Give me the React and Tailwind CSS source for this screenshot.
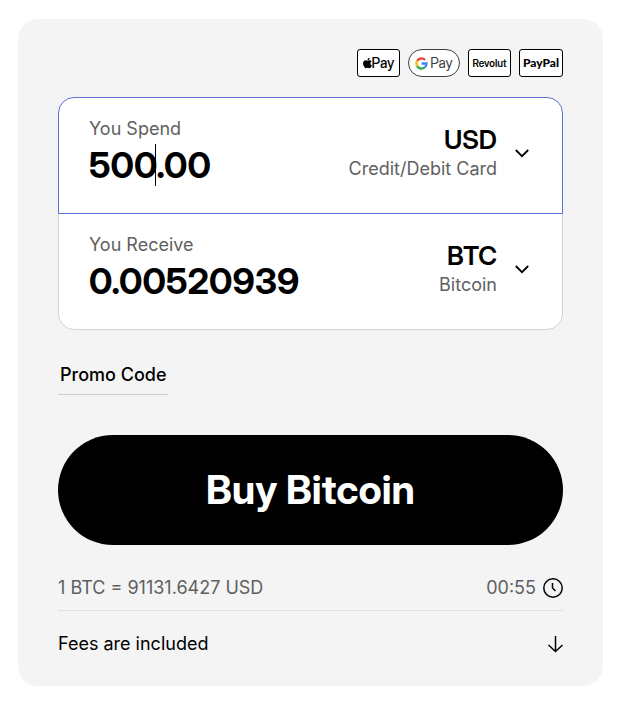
import { useState } from "react";
import { FaApple } from "react-icons/fa";
import { FcGoogle } from "react-icons/fc";

function PaymentMethods() {
  return (
    <ul className="flex justify-end gap-2 font-['Inter_Display','Inter',sans-serif]" aria-label="Payment methods">
      <li className="flex h-7 w-[43px] items-center justify-center rounded-[3px] border border-black bg-white text-sm font-medium">
        <FaApple className="h-3 w-[9px]" preserveAspectRatio="none" aria-hidden="true" />
        <span>Pay</span>
      </li>
      <li className="flex h-7 w-[52px] items-center justify-center gap-0.5 rounded-full border border-[#3c4043] bg-white text-sm text-[#3c4043]">
        <svg className="size-[13px]" viewBox="0 0 24 24" fill="none" strokeWidth="4.4" aria-hidden="true">
          <path d="M4 7.2A9.4 9.4 0 0 1 18.6 5.3" stroke="#ea4335" />
          <path d="M4 7.2a9.6 9.6 0 0 0 0 9.6" stroke="#fbbc04" />
          <path d="M4 16.8a9.4 9.4 0 0 0 14 2.3" stroke="#34a853" />
          <path d="M12.2 12h9.2a9.4 9.4 0 0 1-3.4 7.1" stroke="#4285f4" />
        </svg>
        <span>Pay</span>
      </li>
      <li className="flex h-7 w-[43px] items-center justify-center rounded-[3px] border border-black bg-white text-[10px] font-semibold">
        Revolut
      </li>
      <li className="flex h-7 w-11 items-center justify-center rounded-[3px] border border-black bg-white font-['Lato',sans-serif] text-[12px] font-black">
        PayPal
      </li>
    </ul>
  );
}

function AmountField({ id, label, value, onChange, currency, currencies, detail, caret, className }) {
  return (
    <div className={`flex h-[117px] items-start justify-between border bg-white pt-[19px] pr-8 pl-[30px] ${className}`}>
      <div className="relative min-w-0 flex-1">
        <label htmlFor={id} className="block text-lg leading-6 text-[#5f5f5f]">
          {label}
        </label>
        <input
          id={id}
          type="text"
          inputMode="decimal"
          value={value}
          onChange={onChange}
          className="block h-12 w-full bg-transparent font-['Inter_Display','Inter',sans-serif] text-4xl font-bold outline-none"
        />
        {caret && <span className="absolute top-[27px] left-[66px] h-[42px] w-px bg-black" aria-hidden="true" />}
      </div>
      <div className="flex items-center gap-[17px] pt-2">
        <div className="flex flex-col items-end">
          <select
            aria-label={`${label} currency`}
            defaultValue={currency}
            className="field-sizing-content h-[30px] appearance-none bg-transparent font-['Inter_Display','Inter',sans-serif] text-[26px] leading-[30px] font-semibold outline-none"
          >
            {currencies.map((c) => (
              <option key={c}>{c}</option>
            ))}
          </select>
          <span className="text-lg leading-7 text-[#5f5f5f]">{detail}</span>
        </div>
        <svg className="h-4 w-4" viewBox="0 0 16 16" fill="none" stroke="#000" strokeWidth="1.8" aria-hidden="true">
          <path d="M1.8 4 8 10.2 14.2 4" />
        </svg>
      </div>
    </div>
  );
}

export default function App() {
  const [spend, setSpend] = useState("500.00");
  const [receive, setReceive] = useState("0.00520939");

  return (
    <main className="min-h-screen bg-white pt-[19px] pr-[23px] pb-[19px] pl-[18px] font-['Inter',sans-serif] text-black">
      <form className="rounded-[20px] bg-[#f4f4f4] px-10 pt-[30px] pb-[30px]" onSubmit={(e) => e.preventDefault()}>
        <PaymentMethods />

        <div className="mt-5">
          <AmountField
            id="spend"
            label="You Spend"
            value={spend}
            onChange={(e) => setSpend(e.target.value)}
            currency="USD"
            currencies={["USD"]}
            detail="Credit/Debit Card"
            caret
            className="relative z-10 rounded-t-2xl border-[#5f71d8]"
          />
          <AmountField
            id="receive"
            label="You Receive"
            value={receive}
            onChange={(e) => setReceive(e.target.value)}
            currency="BTC"
            currencies={["BTC"]}
            detail="Bitcoin"
            className="-mt-px rounded-b-2xl border-[#d3d3d3]"
          />
        </div>

        <button type="button" className="mt-8 flex h-[33px] items-end border-b border-[#cfcfcf] px-0.5 pb-[7px] text-lg leading-6 font-medium">
          Promo Code
        </button>

        <button type="submit" className="mt-10 block h-[110px] w-full rounded-full bg-black font-['Inter_Display','Inter',sans-serif] text-[40px] font-bold text-white">
          Buy Bitcoin
        </button>

        <div className="mt-[30px] flex h-9 items-start justify-between border-b border-[#e0e0e0] text-lg leading-[26px] text-[#5f5f5f]">
          <span>1 BTC = 91131.6427 USD</span>
          <span className="flex items-center gap-[7px]">
            00:55
            <svg className="size-5" viewBox="0 0 20 20" fill="none" stroke="#000" strokeWidth="1.5" aria-hidden="true">
              <circle cx="10" cy="10" r="9.2" />
              <path d="M9.5 5v5l3 3" />
            </svg>
          </span>
        </div>

        <button type="button" className="mt-[21px] flex w-full items-center justify-between text-lg leading-6">
          Fees are included
          <svg className="h-[18px] w-4" viewBox="0 0 16 18" fill="none" stroke="#000" strokeWidth="1.5" aria-hidden="true">
            <path d="M8.5 1v15.5M1.5 10l7 6.5 7-6.5" />
          </svg>
        </button>
      </form>
    </main>
  );
}
